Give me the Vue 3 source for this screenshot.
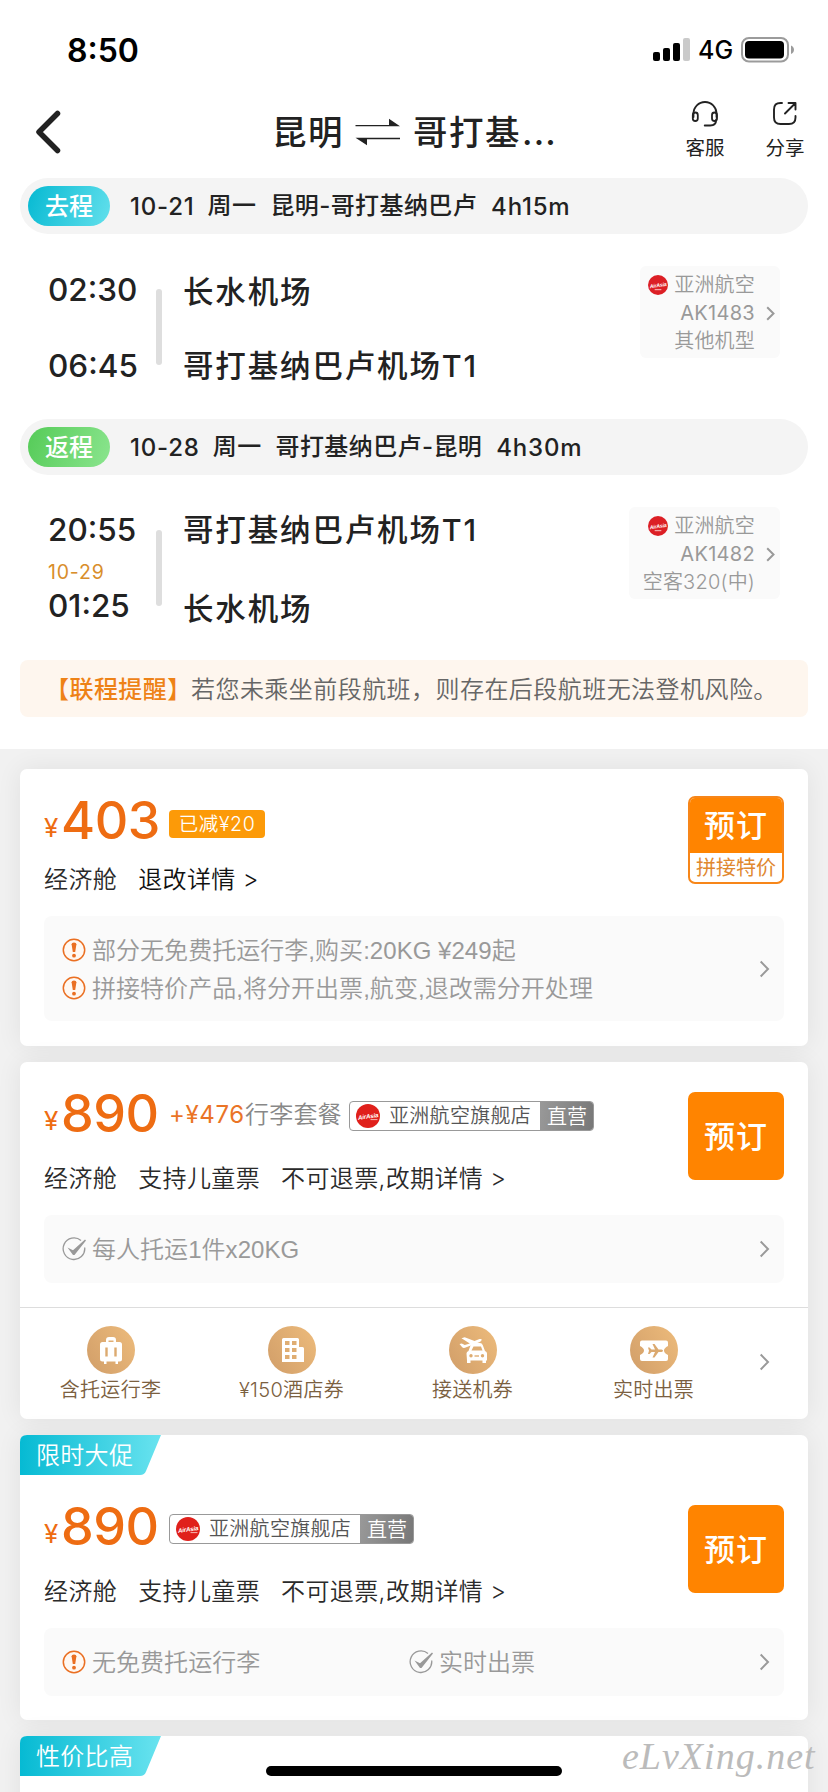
<script setup>
const legs = [
  {
    kind: 'go', badge: '去程', date: '10-21', day: '周一', route: '昆明-哥打基纳巴卢', duration: '4h15m',
    depart: '02:30', arrive: '06:45', nextDay: '', from: '长水机场', to: '哥打基纳巴卢机场T1',
    flight: 'AK1483', plane: '其他机型',
  },
  {
    kind: 'back', badge: '返程', date: '10-28', day: '周一', route: '哥打基纳巴卢-昆明', duration: '4h30m',
    depart: '20:55', arrive: '01:25', nextDay: '10-29', from: '哥打基纳巴卢机场T1', to: '长水机场',
    flight: 'AK1482', plane: '空客320(中)',
  },
]

const offers = [
  {
    id: 'a', price: '403', cut: '已减¥20', sub: '拼接特价', terms: ['经济舱'], detail: '退改详情 >',
    notes: [
      { icon: 'warn', text: '部分无免费托运行李,购买:20KG ¥249起' },
      { icon: 'warn', text: '拼接特价产品,将分开出票,航变,退改需分开处理' },
    ],
  },
  {
    id: 'b', price: '890', extra: '+¥476', extraLabel: '行李套餐', shop: true,
    terms: ['经济舱', '支持儿童票'], detail: '不可退票,改期详情 >',
    notes: [{ icon: 'ok', text: '每人托运1件x20KG' }],
    perks: [
      { icon: 'bag', text: '含托运行李' },
      { icon: 'hotel', text: '¥150酒店券' },
      { icon: 'car', text: '接送机券' },
      { icon: 'ticket', text: '实时出票' },
    ],
  },
  {
    id: 'c', tag: '限时大促', price: '890', shop: true,
    terms: ['经济舱', '支持儿童票'], detail: '不可退票,改期详情 >', inline: true,
    notes: [{ icon: 'warn', text: '无免费托运行李' }, { icon: 'ok', text: '实时出票' }],
  },
]
</script>

<template>
  <div class="screen">
    <div class="status">
      <span class="clock">8:50</span>
      <svg class="signal" width="38" height="24" viewBox="0 0 38 24">
        <rect x="0" y="14" width="7" height="9" rx="2" />
        <rect x="10" y="10" width="7" height="13" rx="2" />
        <rect x="20" y="5" width="7" height="18" rx="2" />
        <rect x="30" y="0" width="7" height="23" rx="2" fill="#cacaca" />
      </svg>
      <span class="net">4G</span>
      <svg class="battery" width="54" height="26" viewBox="0 0 54 26">
        <rect x="1" y="1" width="46" height="23.5" rx="7" fill="none" stroke="#9b9b9b" stroke-width="2" />
        <rect x="4" y="4" width="39" height="17.5" rx="4" />
        <path d="M50 8.500c4 1.500 4 7 0 8.500z" fill="#9b9b9b" />
      </svg>
    </div>

    <header class="nav">
      <svg class="chev" width="28" height="46" viewBox="0 0 28 46">
        <path d="M23.500 4.500 5 23l18.500 18.500" fill="none" stroke="#222" stroke-width="5.500" stroke-linecap="round" stroke-linejoin="round" />
      </svg>
      <h1 class="title">
        <span>昆明</span>
        <svg class="swap" width="46" height="28" viewBox="0 0 46 28">
          <path d="M.500 6.900H34V.700l11 7.500H.500zM45 21.300H12v6L.500 19.800H45z" fill="#222" />
        </svg>
        <span>哥打基<i class="dots">...</i></span>
      </h1>
      <div class="action">
        <svg width="28" height="28" viewBox="0 0 28 28" fill="none" stroke="#222" stroke-width="1.800" stroke-linecap="round">
          <path d="M2.500 17V13.500a11.500 11.500 0 0 1 23 0V17" />
          <rect x="1.800" y="12.500" width="5" height="8.500" rx="2.500" />
          <rect x="21" y="12.500" width="5" height="8.500" rx="2.500" />
          <path d="M25.200 19.500c0 4-2.500 6-6 6h-5.500" />
        </svg>
        <span>客服</span>
      </div>
      <div class="action share">
        <svg width="28" height="28" viewBox="0 0 28 28" fill="none" stroke="#222" stroke-width="1.900" stroke-linecap="round" stroke-linejoin="round">
          <path d="M11 3H9.500Q3 3 3 9.500v8Q3 24 9.500 24h8.500q6.500 0 6.500-6.500V16" />
          <path d="M14 13.500 24 3.500M17.500 3h7v6.500" />
        </svg>
        <span>分享</span>
      </div>
    </header>

    <section v-for="leg in legs" :key="leg.kind" :class="['leg', leg.kind]">
      <div class="strip">
        <span class="badge">{{ leg.badge }}</span>
        <span class="date">{{ leg.date }}</span>
        <span class="cn">{{ leg.day }}</span>
        <span class="cn">{{ leg.route }}</span>
        <span class="dur">{{ leg.duration }}</span>
      </div>
      <div class="flight">
        <div class="times">
          <span class="time">{{ leg.depart }}</span>
          <span class="next">{{ leg.nextDay }}</span>
          <span class="time">{{ leg.arrive }}</span>
        </div>
        <div class="line"></div>
        <div class="ports">
          <span>{{ leg.from }}</span>
          <span>{{ leg.to }}</span>
        </div>
        <div class="carrier">
          <div class="carrier-text">
            <div class="company">
              <svg class="logo" width="20" height="20" viewBox="0 0 24 24">
                <circle cx="12" cy="12" r="12" fill="#dc1f25" />
                <text class="logo-text" x="12" y="14.500" transform="rotate(-8 12 12)">AirAsia</text>
                <path d="M8 17.500h8" stroke="#f3a6a6" stroke-width="1.500" />
              </svg>
              <span>亚洲航空</span>
            </div>
            <div class="code">{{ leg.flight }}</div>
            <div>{{ leg.plane }}</div>
          </div>
          <svg class="more" width="9" height="15" viewBox="0 0 9 15"><path d="M1.200 1.200 7.500 7.500 1.200 13.800" /></svg>
        </div>
      </div>
    </section>

    <div class="notice"><b>【联程提醒】</b><span>若您未乘坐前段航班，则存在后段航班无法登机风险。</span></div>

    <main class="list">
      <article v-for="o in offers" :key="o.id" :class="['card', 'card-' + o.id]">
        <div v-if="o.tag" class="tag">
          <svg width="141" height="40" viewBox="0 0 141 40">
            <defs>
              <linearGradient id="tagFill" x1="0" y1="0" x2="1" y2="0">
                <stop offset="0" stop-color="#06bad3" /><stop offset="1" stop-color="#69e3ef" />
              </linearGradient>
            </defs>
            <path d="M0 40V7Q0 0 7 0H141L126 36Q124.500 40 120 40z" fill="url(#tagFill)" />
          </svg>
          <span>{{ o.tag }}</span>
        </div>
        <div class="main">
          <div class="info">
            <div class="price">
              <span class="yen">¥</span><span class="num">{{ o.price }}</span>
              <span v-if="o.cut" class="cut">{{ o.cut }}</span>
              <span v-if="o.extra" class="extra">{{ o.extra }}</span>
              <span v-if="o.extraLabel" class="extra-label">{{ o.extraLabel }}</span>
              <span v-if="o.shop" class="shop">
                <svg class="logo" width="24" height="24" viewBox="0 0 24 24">
                  <circle cx="12" cy="12" r="12" fill="#e0201b" />
                  <text class="logo-text" x="12" y="14.500" transform="rotate(-8 12 12)">AirAsia</text>
                  <path d="M14.500 15.600h7" stroke="#f6b4b0" stroke-width="1" />
                </svg>
                <span class="shop-name">亚洲航空旗舰店</span>
                <span class="own">直营</span>
              </span>
            </div>
            <div class="terms">
              <span v-for="t in o.terms" :key="t">{{ t }}</span>
              <span class="detail">{{ o.detail }}</span>
            </div>
          </div>
          <button class="book">
            <span class="book-main">预订</span>
            <span v-if="o.sub" class="book-sub">{{ o.sub }}</span>
          </button>
        </div>
        <div :class="['notes', { inline: o.inline }]">
          <div class="note-list">
            <div v-for="n in o.notes" :key="n.text" class="note">
              <svg v-if="n.icon === 'warn'" width="24" height="24" viewBox="0 0 24 24">
                <circle cx="12" cy="12" r="10.700" fill="#fff8f2" stroke="#ea6f22" stroke-width="1.500" />
                <path d="M9.600 6.200Q9.600 4.400 12 4.400t2.400 1.800L13.200 14h-2.400z" fill="#ea6f22" />
                <circle cx="12" cy="17.700" r="1.900" fill="#ea6f22" />
              </svg>
              <svg v-else width="24" height="24" viewBox="0 0 24 24">
                <path d="M19 3.500A10.800 10.800 0 1 0 22.700 10.500" fill="none" stroke="#999" stroke-width="1.300" />
                <path d="M5.500 10.500 11 13.300 23 2.500 24 3.500 12.500 18H11z" fill="#999" />
              </svg>
              <span>{{ n.text }}</span>
            </div>
          </div>
          <svg class="more" width="11" height="18" viewBox="0 0 11 18"><path d="M1.700 1.500 9 9 1.700 16.500" /></svg>
        </div>
        <div v-if="o.perks" class="perks">
          <div v-for="p in o.perks" :key="p.text" :class="['perk', p.icon]">
            <svg width="48" height="48" viewBox="0 0 48 48">
              <defs>
                <linearGradient id="gold" x1="0" y1=".8" x2="1" y2=".2">
                  <stop offset="0" stop-color="#d3a06a" /><stop offset="1" stop-color="#ebb97a" />
                </linearGradient>
              </defs>
              <circle cx="24" cy="24" r="24" fill="url(#gold)" />
              <g v-if="p.icon === 'bag'" fill="#fff">
                <path d="M19 17v-3q0-3 3-3h4q3 0 3 3v3h-2.500v-2.500h-5V17z" />
                <rect x="13" y="16" width="22" height="19.500" rx="2.500" />
                <path d="M17 34h2.500v4H17zM28.500 34H31v4h-2.500z" />
                <path d="M19.500 21.500v9M28.500 21.500v9" stroke="#dcaa70" stroke-width="2.400" />
              </g>
              <g v-else-if="p.icon === 'hotel'" fill="#fff">
                <path d="M14 35.500V13.500q0-1.500 1.500-1.500h14q1.500 0 1.500 1.500V21h3.500q1.500 0 1.500 1.500V36H14z" />
                <path d="M17 15h4.500v4H17zM24 15h4.500v4H24zM17 22h4.500v4H17zM24 22h4.500v4H24zM17 29h4.500v4H17zM24 29h4.500v4H24z" fill="#dfad72" />
              </g>
              <g v-else-if="p.icon === 'car'">
                <path d="M10.500 18l2.300-.600 3 1.700 5-1.700-8.300-5.200 3.200-1L25.500 15l5-2q2.500-.500 2.200 1-.500 1.300-2.500 2.200L16 21.800q-2 .500-3-.800z" fill="#fff" />
                <path d="M21.500 19.500l.500-1.200q.500-1.300 2-1.300H31q2 0 2.700 2L36 25q2 .500 2 2.500v7h-1V37h-3.500v-2.500h-12V37H18v-2.500l-.500-7q0-2 2-2.500z" fill="#fff" />
                <path d="M24.500 20.500H32l1.500 4H22.500z" fill="#deac71" />
                <circle cx="22" cy="29.800" r="1.700" fill="#deac71" /><circle cx="33.500" cy="29.800" r="1.700" fill="#deac71" />
                <path d="M25.500 30h4.500" stroke="#deac71" stroke-width="1.400" />
              </g>
              <g v-else>
                <path d="M12 14.500h24q2 0 2 2V20q-4 2-4 4.500t4 4.500v4q0 2-2 2H12q-2 0-2-2v-4q4-2 4-4.500T10 20v-3.500q0-2 2-2z" fill="#fff" />
                <path d="M18 21.500h1.500l2 2H25l-2.500-5.500h2l4 5.500h3q1.500.300 1.500 1.200t-1.500 1.200h-3l-4 5.500h-2L25 25.900h-3.500l-2 2H18l1-3.200z" fill="#dba96f" />
              </g>
            </svg>
            <span>{{ p.text }}</span>
          </div>
          <svg class="more" width="11" height="18" viewBox="0 0 11 18"><path d="M1.700 1.500 9 9 1.700 16.500" /></svg>
        </div>
      </article>
      <article class="card card-d">
        <div class="tag">
          <svg width="141" height="40" viewBox="0 0 141 40">
            <path d="M0 40V7Q0 0 7 0H141L126 36Q124.500 40 120 40z" fill="url(#tagFill)" />
          </svg>
          <span>性价比高</span>
        </div>
      </article>
    </main>

    <div class="home"></div>
    <div class="watermark">eLvXing.net</div>
  </div>
</template>

<style>
body { margin: 0; }
</style>

<style scoped>
.screen {
  position: relative;
  width: 828px;
  height: 1792px;
  overflow: hidden;
  background: #fff;
  color: #222;
  font-family: Inter, "Noto Sans CJK SC", sans-serif;
  white-space: nowrap;
}
svg { display: block; flex: none; }
.logo { overflow: visible; }
.status {
  display: flex;
  align-items: flex-start;
  height: 96px;
  color: #000;
}
.clock { width: 586px; margin: 31px 0 0 67px; font-size: 32px; line-height: 39px; font-weight: 600; }
.signal { margin-top: 38px; }
.net { width: 43px; margin: 35px 0 0 7px; font-size: 25px; line-height: 31px; font-weight: 500; }
.battery { margin: 37px 0 0 0; }

.nav { display: flex; height: 82px; }
.chev { margin: 13px 0 0 34px; }
.title {
  display: flex;
  width: 411px;
  margin: 15px 0 0 210px;
  font-size: 34.500px;
  line-height: 44px;
  font-weight: 500;
  letter-spacing: 1.500px;
}
.swap { margin: 7px 12px 0 11px; }
.dots { font-style: normal; letter-spacing: 1.200px; margin-left: 1px; }
.action {
  display: flex;
  flex-direction: column;
  align-items: center;
  width: 44px;
  margin-top: 4px;
  font-size: 19.500px;
  line-height: 26px;
}
.action span { margin-top: 7px; }
.share { margin-left: 36px; }

.leg { height: 241px; }
.strip {
  display: flex;
  align-items: center;
  box-sizing: border-box;
  height: 56px;
  margin: 0 20px;
  padding: 0 8px;
  border-radius: 28px;
  background: #f4f4f4;
  font-size: 24px;
  line-height: 30px;
  font-weight: 500;
}
.badge {
  width: 82px;
  height: 40px;
  margin-right: 20px;
  border-radius: 20px;
  background: linear-gradient(110deg, #06b9d2, #63e0ec);
  color: #fff;
  font-size: 24px;
  line-height: 41px;
  text-align: center;
}
.back .badge { background: linear-gradient(110deg, #55cb58, #8be58e); }
.date { margin: 2px 13px 0 0; letter-spacing: .8px; }
.cn { margin: 0 14px 0 0; letter-spacing: .4px; }
.dur { margin-top: 2px; letter-spacing: .8px; }
.flight { display: flex; height: 185px; }
.times { display: flex; flex-direction: column; width: 108px; margin: 37px 0 0 48px; }
.back .times { margin-top: 36px; }
.time { height: 38px; font-size: 31.500px; line-height: 38px; font-weight: 500; letter-spacing: 0; }
.next { height: 38px; color: #d98e2b; font-size: 19.500px; line-height: 47px; letter-spacing: .8px; }
.line { width: 6px; height: 76px; margin-top: 55px; border-radius: 3px; background: #dedede; }
.ports { display: flex; flex: 1; flex-direction: column; gap: 33px; padding: 37px 0 0 21px; font-size: 30.500px; line-height: 41px; font-weight: 500; letter-spacing: 1.850px; }
.back .ports { gap: 38px; padding-top: 34px; }
.carrier {
  display: flex;
  align-items: center;
  box-sizing: border-box;
  height: 92px;
  margin: 32px 48px 0 0;
  padding: 2px 5px 0 8px;
  border-radius: 6px;
  background: #fafafa;
  color: #999;
  font-size: 20px;
  font-weight: 350;
  line-height: 28px;
  letter-spacing: .2px;
  text-align: right;
}
.back .carrier { padding-left: 14px; }
.company { display: flex; align-items: center; justify-content: flex-end; gap: 6px; }
.code { letter-spacing: .3px; font-weight: 400; }
.carrier .more { margin-left: 11px; }
.more path { fill: none; stroke: #999; stroke-width: 2px; }
.logo-text { fill: #fff; font: italic 700 6.200px "Liberation Sans", sans-serif; letter-spacing: -.200px; text-anchor: middle; }

.notice {
  display: flex;
  height: 57px;
  margin: 0 20px 32px;
  border-radius: 8px;
  background: #fef6ee;
  color: #666;
  font-size: 24px;
  font-weight: 350;
  line-height: 59px;
  letter-spacing: .45px;
}
.notice b { width: 146px; margin-left: 25px; color: #ee8216; font-weight: 500; }

.list {
  display: flex;
  flex-direction: column;
  gap: 16px;
  box-sizing: border-box;
  height: 1043px;
  padding: 20px;
  background: #f1f1f1;
  overflow: hidden;
}
.card {
  flex: none;
  border-radius: 7px;
  background: #fff;
  box-shadow: 0 0 26px rgba(0, 0, 0, .07);
}
.card-a { height: 277px; }
.card-b { height: 357px; }
.card-c { height: 285px; }
.card-d { height: 200px; }
.tag { display: grid; height: 40px; color: #fff; font-size: 24px; font-weight: 350; line-height: 42px; letter-spacing: .3px; }
.tag > * { grid-area: 1 / 1; }
.tag span { padding-left: 16px; z-index: 1; }
.main { display: flex; justify-content: space-between; height: 153px; padding: 0 24px; }
.card-a .main { height: 147px; }
.info { padding-top: 27px; }
.price { display: flex; align-items: center; height: 50px; color: #ee6c12; }
.yen { width: 17px; margin-top: 14px; font-size: 26px; line-height: 30px; }
.num { width: 108px; font-size: 52px; line-height: 50px; font-weight: 500; letter-spacing: -.500px; }
.cut {
  box-sizing: border-box;
  width: 96px;
  height: 28px;
  margin-top: 5px;
  border-radius: 4px;
  background: #fc9a08;
  color: #fff;
  font-size: 19.500px;
  font-weight: 350;
  line-height: 29px;
  letter-spacing: .6px;
  text-align: center;
}
.extra { width: 76px; margin-top: 2px; color: #ea7426; font-size: 24px; line-height: 30px; letter-spacing: .6px; }
.extra-label { width: 104px; margin-top: 2px; color: #888; font-size: 24px; font-weight: 350; line-height: 30px; letter-spacing: .2px; }
.shop {
  display: flex;
  align-items: center;
  box-sizing: border-box;
  width: 245px;
  height: 30px;
  margin-top: 4px;
  padding-left: 6px;
  border: 1px solid #999;
  border-radius: 4px;
  overflow: hidden;
  color: #555;
  font-size: 20px;
  font-weight: 350;
}
.shop-name { width: 151px; margin-left: 9px; letter-spacing: .3px; line-height: 31px; }
.own { width: 54px; margin-right: -1px; background: linear-gradient(100deg, #999, #777); color: #fff; line-height: 30px; height: 29px; text-align: center; }
.terms {
  display: flex;
  gap: 21px;
  margin-top: 24px;
  color: #2a2a2a;
  font-size: 24px;
  font-weight: 350;
  line-height: 32px;
  letter-spacing: .38px;
}
.card-a .terms { margin-top: 18px; }
.card-a .detail { color: #111; }
.book {
  display: flex;
  flex-direction: column;
  box-sizing: border-box;
  width: 96px;
  height: 88px;
  margin: 30px 0 0;
  padding: 0;
  border: 2px solid #ff8400;
  border-radius: 7px;
  overflow: hidden;
  background: #ff8400;
  color: #fff;
  font-family: inherit;
}
.card-a .book { margin-top: 27px; background: #fff; border-color: #f78619; }
.book-main { height: 84px; font-size: 31px; line-height: 86px; font-weight: 500; letter-spacing: 1px; text-align: center; width: 100%; }
.card-a .book-main { height: 55px; line-height: 56px; background: #ff8400; }
.book-sub { width: 100%; color: #e0882f; font-size: 20px; line-height: 31px; text-align: center; }
.notes {
  display: flex;
  align-items: center;
  justify-content: space-between;
  box-sizing: border-box;
  height: 68px;
  margin: 0 24px 24px;
  padding: 0 14px 0 18px;
  border-radius: 8px;
  background: #fafafa;
  color: #999;
  font-family: "Liberation Sans", "Noto Sans CJK SC", sans-serif;
  font-size: 24px;
  font-weight: 350;
}
.card-a .notes { height: 105px; }
.note { display: flex; align-items: center; gap: 6px; height: 38px; line-height: 38px; letter-spacing: .04px; }
.note span { padding-top: 2px; }
.inline .note-list { display: grid; grid-template-columns: 347px auto; }
.perks {
  display: grid;
  grid-template-columns: repeat(4, 181px) auto;
  box-sizing: border-box;
  height: 112px;
  padding-top: 18px;
  border-top: 1px solid #ddd;
}
.perk { display: flex; flex-direction: column; align-items: center; color: #7b6040; font-size: 20px; font-weight: 350; line-height: 26px; letter-spacing: .3px; }
.perk span { margin-top: 3px; }
.perks .more { margin: 27px 0 0 15px; }

.home { position: absolute; left: 266px; top: 1766px; width: 296px; height: 10px; border-radius: 5px; background: #000; }
.watermark {
  position: absolute;
  left: 622px;
  top: 1733px;
  color: #bbb;
  font: italic 38px/46px "Liberation Serif", serif;
  letter-spacing: 1px;
}
</style>
